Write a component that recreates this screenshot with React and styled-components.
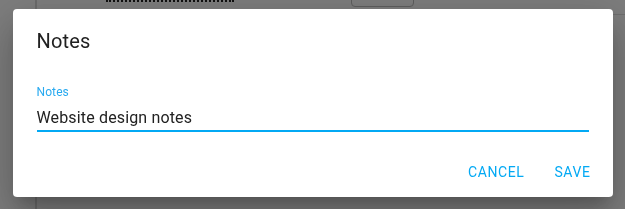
import React from 'react';
import styled, { createGlobalStyle } from 'styled-components';

const GlobalStyle = createGlobalStyle`
  html, body {
    margin: 0;
    padding: 0;
    background: #fff;
    font-family: Roboto, "Liberation Sans", Arial, sans-serif;
    overflow: hidden;
  }
`;

const Page = styled.div`
  display: flex;
  height: 209px;
  width: 625px;
  background: #fafafa;
`;

const Sidebar = styled.aside`
  width: 35px;
  border-right: 2px solid #d6d6d6;
`;

const Main = styled.main`
  flex: 1;
  display: flex;
  flex-direction: column;
`;

const Toolbar = styled.div`
  display: flex;
  align-items: flex-end;
  height: 14px;
  border-bottom: 1px solid #dcdcdc;
`;

const DottedRule = styled.span`
  align-self: flex-start;
  margin-left: 69px;
  width: 128px;
  height: 1px;
  border-top: 2px dotted #222;
`;

const GhostButton = styled.span`
  align-self: flex-start;
  margin-left: 117px;
  margin-top: -24px;
  width: 61px;
  height: 29px;
  border: 1px solid #bbb;
  border-radius: 4px;
`;

const Backdrop = styled.div`
  position: fixed;
  inset: 0;
  background: rgba(0, 0, 0, 0.5);
  display: flex;
  justify-content: center;
  align-items: flex-start;
  padding-top: 9px;
`;

const Dialog = styled.div`
  width: 600px;
  background: #fff;
  border-radius: 4px;
  box-shadow: 0 11px 15px -7px rgba(0, 0, 0, 0.2), 0 24px 38px 3px rgba(0, 0, 0, 0.14),
    0 9px 46px 8px rgba(0, 0, 0, 0.12);
  display: flex;
  flex-direction: column;
`;

const Title = styled.h2`
  margin: 0;
  padding: 16px 24px 0;
  font-size: 20px;
  line-height: 32px;
  font-weight: 400;
  letter-spacing: 0.15px;
  color: #212121;
`;

const Content = styled.div`
  padding: 29px 24px 14px;
`;

const Label = styled.label`
  display: block;
  font-size: 12px;
  line-height: 12px;
  letter-spacing: 0.1px;
  color: #29aaf0;
`;

const Input = styled.div`
  margin-top: 10px;
  padding-bottom: 3px;
  font-size: 16px;
  line-height: 19px;
  letter-spacing: 0.15px;
  color: #212121;
  border-bottom: 2px solid #03a9f4;
`;

const Actions = styled.div`
  display: flex;
  justify-content: flex-end;
  gap: 8px;
  padding: 8px 8px 7px;
`;

const TextButton = styled.button`
  min-width: 64px;
  padding: 6px 8px;
  border: 0;
  background: none;
  font-family: inherit;
  font-size: 14px;
  line-height: 24px;
  font-weight: 400;
  letter-spacing: 0.6px;
  text-transform: uppercase;
  color: #03a9f4;
  cursor: pointer;
`;

export default function App() {
  return (
    <>
      <GlobalStyle />
      <Page>
        <Sidebar />
        <Main>
          <Toolbar>
            <DottedRule />
            <GhostButton />
          </Toolbar>
        </Main>
      </Page>
      <Backdrop>
        <Dialog>
          <Title>Notes</Title>
          <Content>
            <Label>Notes</Label>
            <Input>Website design notes</Input>
          </Content>
          <Actions>
            <TextButton>Cancel</TextButton>
            <TextButton>Save</TextButton>
          </Actions>
        </Dialog>
      </Backdrop>
    </>
  );
}
